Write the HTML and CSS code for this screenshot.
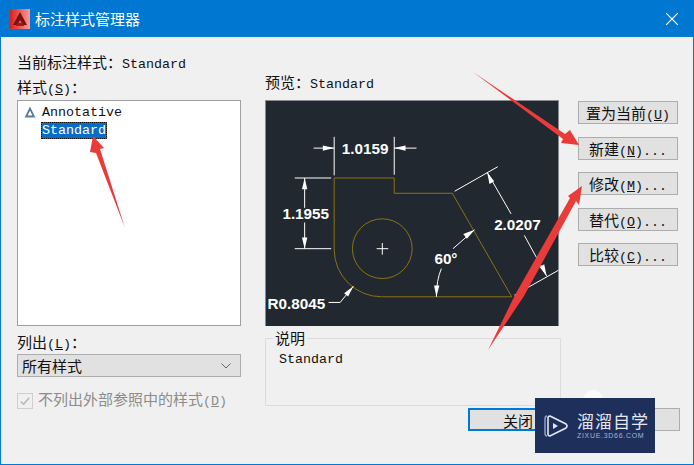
FILE: index.html
```html
<!DOCTYPE html>
<html lang="zh-CN">
<head>
  <meta charset="UTF-8" />
  <title>标注样式管理器</title>
  <link rel="stylesheet" href="styles.css">
</head>
<body>
  <div class="dialog">
    <div class="titlebar">
      <svg class="app-icon" viewBox="0 0 20 20">
        <defs>
          <linearGradient id="iconBg" x1="0" y1="0" x2="1" y2="0">
            <stop offset="0" stop-color="#d9201c"/>
            <stop offset="1" stop-color="#f79a98"/>
          </linearGradient>
        </defs>
        <rect width="20" height="20" fill="url(#iconBg)"/>
        <path d="M10 3 L17 16 H12.8 L10 11 L7.2 16 H3Z" fill="#7d0f12"/>
        <path d="M7 14 H13 L14 17 H6Z" fill="#a8141a"/>
      </svg>
      <span class="title-text">标注样式管理器</span>
      <svg class="close-icon" viewBox="0 0 12 12"><path d="M0 0 L12 12 M12 0 L0 12" stroke="#fff" stroke-width="1.2"/></svg>
    </div>

    <div class="content">
      <div class="col-left">
        <div class="label">当前标注样式：<span class="lat">Standard</span></div>
        <div class="label label-styles">样式<span class="lat">(<u>S</u>)</span>：</div>
        <div class="listbox">
          <div class="list-row">
            <svg class="anno-icon" viewBox="0 0 10 10"><path d="M5 0.5 L9.5 9.5 H0.5Z M5 4 L3 8 H7Z" fill="#5b7a9c" fill-rule="evenodd"/></svg>
            <span class="lat">Annotative</span>
          </div>
          <div class="list-row"><span class="lat selected">Standard</span></div>
        </div>
        <div class="label label-list">列出<span class="lat">(<u>L</u>)</span>：</div>
        <div class="select">
          <span>所有样式</span>
          <svg class="chevron" viewBox="0 0 10 6"><path d="M0.5 0.5 L5 5 L9.5 0.5" fill="none" stroke="#666" stroke-width="1"/></svg>
        </div>
        <div class="check-row">
          <span class="checkbox"><svg viewBox="0 0 15 15"><path d="M3 8 L6 11 L12 4" fill="none" stroke="#b5b5b5" stroke-width="1.5"/></svg></span>
          <span>不列出外部参照中的样式<span class="lat">(<u>D</u>)</span></span>
        </div>
      </div>

      <div class="col-mid">
        <div class="label">预览：<span class="lat">Standard</span></div>
        <svg class="preview" viewBox="15 90 883 678">
          <rect x="15" y="90" width="883" height="678" fill="#212830"/>
          <g fill="none" stroke="#8a7414" stroke-width="3">
            <path d="M222 540 V322 H403 V368 H578 L757 680 H365 A143 143 0 0 1 222 540Z"/>
            <circle cx="367" cy="535" r="90"/>
          </g>
          <g fill="none" stroke="#fff" stroke-width="3">
            <path d="M350 535 H385 M367 518 V553"/>
            <path d="M222 198 V314 M403 198 V312 M160 232 H222 M403 232 H470"/>
            <path d="M103 322 H213 M103 535 H213 M133 322 V412 M133 456 V535"/>
            <path d="M205 697 H240 L280 648"/>
            <path d="M585 362 L715 288 M765 675 L898 600"/>
            <path d="M683 305 L755 430 M795 495 L862 617"/>
            <path d="M645 478 L580 535 M545 595 Q530 630 530 680"/>
          </g>
          <g fill="#fff">
            <path d="M222 232 L188 224 V240Z"/>
            <path d="M403 232 L437 224 V240Z"/>
            <path d="M133 322 L125 356 H141Z"/>
            <path d="M133 535 L125 501 H141Z"/>
            <path d="M280 648 L252 669 L264 679Z"/>
            <path d="M683 305 L690 340 L704 332Z"/>
            <path d="M862 617 L841 590 L855 582Z"/>
            <path d="M645 478 L611 491 L622 505Z"/>
            <path d="M530 680 L523 646 H539Z"/>
          </g>
          <g class="dim-text">
            <text x="245" y="250">1.0159</text>
            <text x="66" y="446">1.1955</text>
            <text x="704" y="479">2.0207</text>
            <text x="524" y="581">60°</text>
            <text x="21" y="716">R0.8045</text>
          </g>
        </svg>
        <fieldset class="group">
          <legend>说明</legend>
          <span class="lat group-text">Standard</span>
        </fieldset>
      </div>

      <div class="col-right">
        <button class="btn">置为当前<span class="lat">(<u>U</u>)</span></button>
        <button class="btn">新建<span class="lat">(<u>N</u>)...</span></button>
        <button class="btn">修改<span class="lat">(<u>M</u>)...</span></button>
        <button class="btn">替代<span class="lat">(<u>O</u>)...</span></button>
        <button class="btn">比较<span class="lat">(<u>C</u>)...</span></button>
      </div>
    </div>

    <div class="footer">
      <button class="btn btn-default">关闭</button>
      <button class="btn" aria-label="帮助"></button>
    </div>
  </div>

  <!-- red annotation arrows over the dialog -->
  <svg class="arrows" viewBox="0 0 694 465">
    <g fill="#ea3b3b">
      <path d="M93 136 L104 148 L100 149 L125 228 L96 153 L90 152Z"/>
      <path d="M473 72 L565 134 L570 130 L579 145 L561 143 L563 139Z"/>
      <path d="M488 350 L515 295 L570 198 L568 196 L582 186 L579 205 L576 201 L524 296Z"/>
    </g>
  </svg>

  <div class="mascot"></div>
  <div class="watermark">
    <svg class="wm-icon" viewBox="0 0 26 26">
      <path d="M4 3 Q2 3 2 6 V20 Q2 23 4 23" fill="none" stroke="#8fa0c4" stroke-width="1.5"/>
      <path d="M7 3 L23 11 Q25 13 23 15 L7 23 Q5 23 5 21 V5 Q5 3 7 3Z" fill="none" stroke="#e3e7f0" stroke-width="1.6"/>
      <path d="M10 10 L15 13 L10 16Z" fill="#e3e7f0"/>
    </svg>
    <div class="wm-text">
      <div class="wm-name">溜溜自学</div>
      <div class="wm-url">ZIXUE.3D66.COM</div>
    </div>
  </div>
</body>
</html>
```

FILE: styles.css
```css
* {
  box-sizing: border-box;
}

body {
  margin: 0;
  width: 694px;
  height: 465px;
  overflow: hidden;
  position: relative;
  font-family: "Noto Sans CJK SC", sans-serif;
  font-size: 15px;
  color: #111;
  background: #f0f0f0;
}

.lat {
  font-family: "Liberation Mono", monospace;
  font-size: 13.33px;
}

.dialog {
  width: 694px;
  height: 465px;
  border: 1px solid #0078d7;
  border-top: none;
  display: flex;
  flex-direction: column;
}

.titlebar {
  height: 37px;
  background: #0078d2;
  color: #fff;
  display: flex;
  align-items: center;
  padding: 0 15px 0 9px;
}

.app-icon {
  width: 20px;
  height: 20px;
  margin-right: 5px;
}

.title-text {
  line-height: 20px;
}

.close-icon {
  width: 12px;
  height: 12px;
  margin-left: auto;
}

.content {
  display: flex;
  padding: 15px 0 0 16px;
  height: 371px;
}

.label {
  height: 20px;
  line-height: 20px;
  white-space: nowrap;
}

.col-left {
  width: 224px;
  margin-right: 24px;
}

.label-styles {
  margin-top: 5px;
  height: 23px;
}

.listbox {
  height: 226px;
  background: #fff;
  border: 1px solid #a0a0a0;
  padding: 2px 0 0 6px;
}

.list-row {
  display: flex;
  align-items: center;
  height: 18px;
  padding-left: 18px;
  position: relative;
}

.anno-icon {
  position: absolute;
  left: 0;
  top: 3px;
  width: 12px;
  height: 12px;
}

.selected {
  background: #0a6cc4;
  color: #fff;
  outline: 1px dotted #111;
  outline-offset: -1px;
  line-height: 17px;
  padding: 0 1px;
  margin-left: -1px;
}

.label-list {
  margin-top: 6px;
  height: 22px;
}

.select {
  height: 23px;
  background: #e1e1e1;
  border: 1px solid #adadad;
  display: flex;
  align-items: center;
  justify-content: space-between;
  padding: 0 9px 0 4px;
}

.chevron {
  width: 10px;
  height: 6px;
}

.check-row {
  display: flex;
  align-items: center;
  margin-top: 14px;
  color: #8c8c8c;
  white-space: nowrap;
  line-height: 16px;
}

.checkbox {
  width: 16px;
  height: 16px;
  border: 1px solid #cfcfcf;
  margin-right: 5px;
  display: flex;
}

.checkbox svg {
  width: 14px;
  height: 14px;
}

.col-mid {
  width: 296px;
  margin-right: 17px;
  padding-top: 20px;
}

.col-mid .label {
  height: 28px;
}

.preview {
  display: block;
  width: 294px;
  height: 226px;
  border-top: 1px solid #8d8d8d;
}

.dim-text {
  font-family: "Liberation Sans", sans-serif;
  font-weight: bold;
  font-size: 46px;
  fill: #fff;
}

.group {
  margin: 4px 0 0;
  padding: 2px 0 0;
  width: 296px;
  height: 76px;
  border: 1px solid #dcdcdc;
  line-height: 18px;
}

.group legend {
  margin-left: 7px;
  padding: 0 2px;
  line-height: 16px;
  font-size: 15px;
}

.group-text {
  margin-left: 13px;
}

.col-right {
  width: 100px;
  padding-top: 49px;
  display: flex;
  flex-direction: column;
  gap: 12.5px;
}

.btn {
  width: 100px;
  height: 23px;
  padding: 0;
  background: #e1e1e1;
  border: 1px solid #adadad;
  font-family: inherit;
  font-size: 15px;
  color: #111;
  line-height: 21px;
  white-space: nowrap;
}

.footer {
  display: flex;
  justify-content: flex-end;
  gap: 12px;
  padding-right: 13px;
}

.btn-default {
  border: 2px solid #0078d7;
}

.arrows {
  position: absolute;
  left: 0;
  top: 0;
  width: 694px;
  height: 465px;
  pointer-events: none;
}

.mascot {
  position: absolute;
  left: 583px;
  top: 390px;
  width: 20px;
  height: 10px;
  border-radius: 10px 10px 0 0;
  background: #fbfbfb;
}

.watermark {
  position: absolute;
  left: 535px;
  top: 398px;
  width: 120px;
  height: 55px;
  background: #1e2f5c;
  display: flex;
  align-items: center;
  padding: 0 0 0 8px;
  color: #e3e7f0;
}

.wm-icon {
  width: 26px;
  height: 26px;
  margin-right: 8px;
}

.wm-name {
  font-size: 17px;
  line-height: 20px;
  letter-spacing: 1px;
  white-space: nowrap;
}

.wm-url {
  font-family: "Liberation Sans", sans-serif;
  font-size: 7px;
  line-height: 10px;
  letter-spacing: .7px;
  color: #a9b3cc;
  white-space: nowrap;
}
```
